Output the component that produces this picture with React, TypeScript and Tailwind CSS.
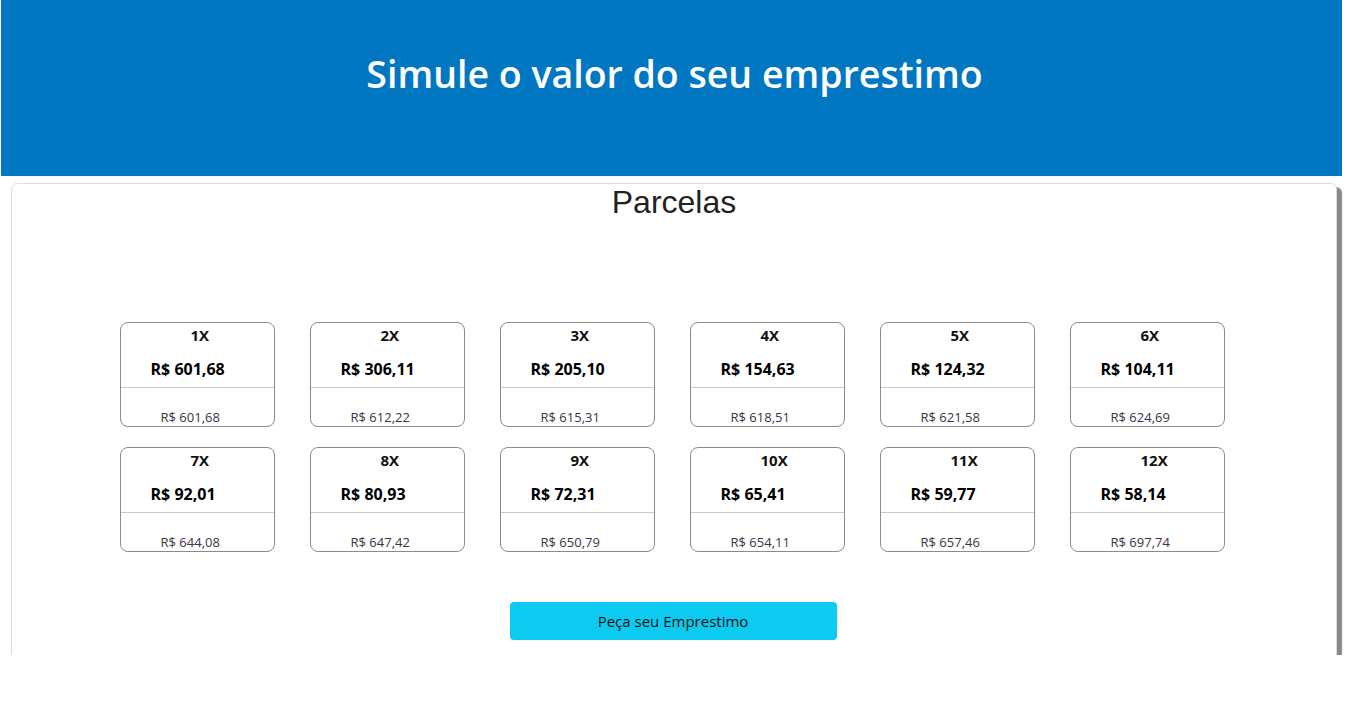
const PARCELAS = [
  { n: '1X', valor: '601,68', total: '601,68' },
  { n: '2X', valor: '306,11', total: '612,22' },
  { n: '3X', valor: '205,10', total: '615,31' },
  { n: '4X', valor: '154,63', total: '618,51' },
  { n: '5X', valor: '124,32', total: '621,58' },
  { n: '6X', valor: '104,11', total: '624,69' },
  { n: '7X', valor: '92,01', total: '644,08' },
  { n: '8X', valor: '80,93', total: '647,42' },
  { n: '9X', valor: '72,31', total: '650,79' },
  { n: '10X', valor: '65,41', total: '654,11' },
  { n: '11X', valor: '59,77', total: '657,46' },
  { n: '12X', valor: '58,14', total: '697,74' },
]

function ParcelaCard({ n, valor, total }: { n: string; valor: string; total: string }) {
  return (
    <div className="flex h-[105px] w-[155px] flex-col rounded-[8px] border border-[#8a8a8a] bg-white">
      <div className="h-[65px] border-b border-[#c8c8c8]">
        <div className="mt-[2px] pl-[70px] text-[15px] leading-[20px] font-bold text-[#111]">{n}</div>
        <div className="mt-[14px] pl-[30px] text-[16px] leading-[21px] font-bold text-black">R$ {valor}</div>
      </div>
      <div className="pl-[40px] pt-[20px] text-[13px] leading-[18px] text-[#3b3346]">R$ {total}</div>
    </div>
  )
}

export default function App() {
  return (
    <div className="h-[704px] overflow-hidden bg-white font-['Open_Sans',sans-serif]">
      <header className="ml-[1px] flex h-[176px] w-[1341px] justify-center bg-[#0176c1] pl-[6px] pt-[49px]">
        <h1 className="text-[37.5px] leading-[50px] font-semibold text-white">Simule o valor do seu emprestimo</h1>
      </header>

      <div className="h-[479px] overflow-hidden pt-[7px]">
        <section className="ml-[11px] h-[500px] w-[1326px] rounded-[6px] border border-[#dcdcdc] bg-white shadow-[5px_4px_1px_#888]">
          <h2 className="text-center font-['Liberation_Sans',Arial,sans-serif] text-[32px] leading-[36px] text-[#222]">
            Parcelas
          </h2>

          <div className="mt-[102px] flex justify-center pr-[4px]">
            <div className="grid grid-cols-6 gap-x-[35px] gap-y-[20px]">
              {PARCELAS.map((p) => (
                <ParcelaCard key={p.n} {...p} />
              ))}
            </div>
          </div>

          <div className="mt-[50px] flex justify-center pr-[2px]">
            <button className="h-[38px] w-[327px] rounded-[4px] bg-[#0dcaf0] text-[15px] text-[#111]">
              Peça seu Emprestimo
            </button>
          </div>
        </section>
      </div>
    </div>
  )
}
